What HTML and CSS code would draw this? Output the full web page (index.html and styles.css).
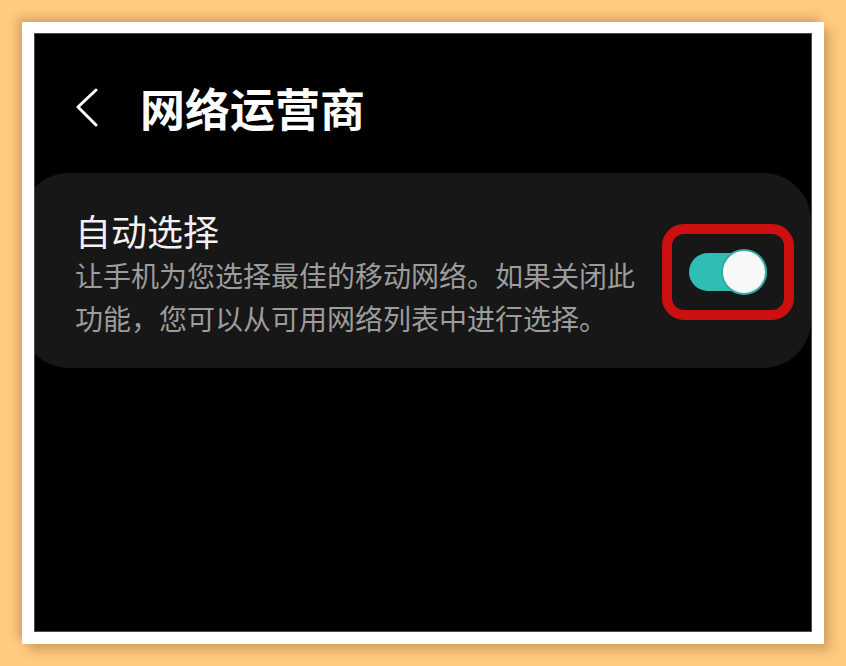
FILE: index.html
```html
<!DOCTYPE html>
<html lang="zh-CN">
<head>
<meta charset="utf-8">
<link rel="stylesheet" href="styles.css">
</head>
<body>
<div class="frame">
  <div class="screen">
    <header class="header">
      <svg class="back" width="24" height="40" viewBox="0 0 24 40"><path d="M21 2 L3 19 L21 37" fill="none" stroke="#fff" stroke-width="3" stroke-linecap="round" stroke-linejoin="round"/></svg>
      <h1 class="title">网络运营商</h1>
    </header>
    <section class="card">
      <div class="text">
        <div class="card-title">自动选择</div>
        <div class="desc">让手机为您选择最佳的移动网络。如果关闭此功能，您可以从可用网络列表中进行选择。</div>
      </div>
      <div class="highlight">
        <div class="toggle"><span class="thumb"></span></div>
      </div>
    </section>
  </div>
</div>
</body>
</html>
```
FILE: styles.css
```css
html, body {
  margin: 0;
  padding: 0;
}
body {
  width: 846px;
  height: 666px;
  background: #ffcb80;
  font-family: "Noto Sans CJK SC", "Noto Sans", sans-serif;
  overflow: hidden;
}
.frame {
  margin: 22px 0 0 22px;
  width: 802px;
  height: 622px;
  box-sizing: border-box;
  padding: 11px 12px 12px 12px;
  background: #ffffff;
  box-shadow: -5px -5px 9px rgba(120, 80, 20, 0.28), 6px 7px 10px rgba(120, 80, 20, 0.3);
}
.screen {
  width: 100%;
  height: 100%;
  box-sizing: border-box;
  background: #000;
  border: 1px solid #4a4a4a;
  overflow: hidden;
}
.header {
  display: flex;
  align-items: center;
  height: 64px;
  margin-top: 42px;
  padding-left: 40px;
}
.back {
  display: block;
  margin-right: 41px;
}
.title {
  margin: 0;
  font-size: 45px;
  line-height: 64px;
  font-weight: 700;
  color: #fff;
}
.card {
  margin-top: 33px;
  margin-left: -14px;
  display: flex;
  align-items: center;
  background: #171717;
  border-radius: 48px;
  padding: 37px 17px 28px 54px;
}
.text {
  flex: 1;
  min-width: 0;
  max-width: 575px;
}
.card-title {
  font-size: 36px;
  line-height: 40px;
  color: #f2f2f2;
  margin-bottom: 4px;
}
.desc {
  font-size: 28px;
  line-height: 43px;
  color: #9c9c9c;
}
.highlight {
  margin-left: auto;
  width: 132px;
  height: 96px;
  box-sizing: border-box;
  border: 10px solid #cc1010;
  border-radius: 22px;
  display: flex;
  align-items: center;
  justify-content: center;
  margin-bottom: 6px;
}
.toggle {
  position: relative;
  width: 78px;
  height: 38px;
  border-radius: 19px;
  background: #2fbdb6;
}
.thumb {
  position: absolute;
  right: 0;
  top: -4px;
  width: 42px;
  height: 42px;
  border-radius: 50%;
  background: #f8f8f8;
  border: 2px solid #3aa9a2;
}
```
